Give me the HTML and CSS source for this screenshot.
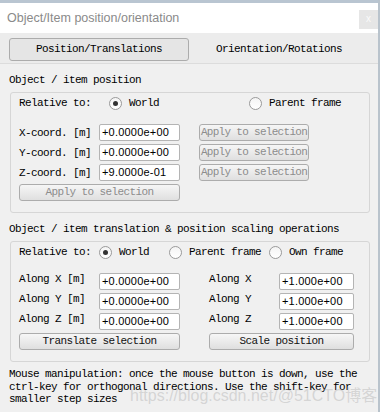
FILE: index.html
```html
<!DOCTYPE html>
<html>
<head>
    <link rel="stylesheet" href="styles.css">
</head>
<body>
    <div class="window">
        <div class="topstrip"></div>
        <div class="titlebar">
            <span class="title">Object/Item position/orientation</span>
            <span class="close">x</span>
        </div>
        <div class="tabbar">
            <div class="tab active">Position/Translations</div>
            <div class="tab">Orientation/Rotations</div>
        </div>

        <div class="content">
            <div class="section-title">Object / item position</div>
            <div class="group">
                <div class="rel-row">
                    <span class="rel-label wide-label">Relative to:</span>
                    <span class="radio checked item-world1"><i></i>World</span>
                    <span class="radio"><i></i>Parent frame</span>
                </div>
                <div class="rows">
                    <div class="row">
                        <span class="lbl">X-coord. [m]</span>
                        <span class="field">+0.0000e+00</span>
                        <span class="btn disabled apply">Apply to selection</span>
                    </div>
                    <div class="row">
                        <span class="lbl">Y-coord. [m]</span>
                        <span class="field">+0.0000e+00</span>
                        <span class="btn disabled apply">Apply to selection</span>
                    </div>
                    <div class="row">
                        <span class="lbl">Z-coord. [m]</span>
                        <span class="field">+9.0000e-01</span>
                        <span class="btn disabled apply">Apply to selection</span>
                    </div>
                    <div class="row">
                        <span class="btn disabled left-btn">Apply to selection</span>
                    </div>
                </div>
            </div>

            <div class="section-title second">Object / item translation &amp; position scaling operations</div>
            <div class="group">
                <div class="rel-row">
                    <span class="rel-label">Relative to:</span>
                    <span class="radio checked item-world2"><i></i>World</span>
                    <span class="radio item-parent2"><i></i>Parent frame</span>
                    <span class="radio"><i></i>Own frame</span>
                </div>
                <div class="rows">
                    <div class="row">
                        <div class="half">
                            <span class="lbl">Along X [m]</span>
                            <span class="field">+0.0000e+00</span>
                        </div>
                        <div class="half-right">
                            <span class="lbl short">Along X</span>
                            <span class="field small">+1.000e+00</span>
                        </div>
                    </div>
                    <div class="row">
                        <div class="half">
                            <span class="lbl">Along Y [m]</span>
                            <span class="field">+0.0000e+00</span>
                        </div>
                        <div class="half-right">
                            <span class="lbl short">Along Y</span>
                            <span class="field small">+1.000e+00</span>
                        </div>
                    </div>
                    <div class="row">
                        <div class="half">
                            <span class="lbl">Along Z [m]</span>
                            <span class="field">+0.0000e+00</span>
                        </div>
                        <div class="half-right">
                            <span class="lbl short">Along Z</span>
                            <span class="field small">+1.000e+00</span>
                        </div>
                    </div>
                    <div class="row">
                        <span class="btn left-btn">Translate selection</span>
                        <span class="btn scale-btn">Scale position</span>
                    </div>
                </div>
            </div>

            <div class="note">Mouse manipulation: once the mouse button is down, use the ctrl-key for orthogonal directions. Use the shift-key for smaller step sizes</div>
        </div>
        <div class="watermark">https://blog.csdn.net/@51CTO博客</div>
    </div>
</body>
</html>
```

FILE: styles.css
```css
body {
    margin: 0;
    width: 380px;
    height: 412px;
    overflow: hidden;
    background-color: #f0f0f0;
    font-family: "Liberation Mono", monospace;
    font-size: 11px;
    letter-spacing: -0.6px;
    color: #000;
}

.window {
    position: relative;
    height: 412px;
    border-right: 2px solid #b9c3cc;
    overflow: hidden;
}

.topstrip {
    height: 3px;
    background-color: #b9c5d1;
}

.titlebar {
    height: 30px;
    background-color: #ffffff;
    display: flex;
    justify-content: space-between;
    align-items: flex-start;
}

.title {
    font-family: "Liberation Sans", sans-serif;
    font-size: 12.5px;
    letter-spacing: 0;
    color: #8a8a8a;
    padding: 8px 0 0 7px;
}

.close {
    width: 19px;
    height: 19px;
    margin-top: 7px;
    background-color: #e6e6e6;
    color: #fafafa;
    font-family: "Liberation Sans", sans-serif;
    font-size: 10px;
    letter-spacing: 0;
    text-align: center;
    line-height: 18px;
}

.tabbar {
    display: flex;
    padding: 5px 9px 2px 9px;
    background-color: #ececec;
    border-bottom: 1px solid #dcdcdc;
}

.tab {
    width: 181px;
    height: 23px;
    box-sizing: border-box;
    line-height: 21px;
    text-align: center;
    border: 1px solid transparent;
}

.tab.active {
    background-color: #e5e5e5;
    border-color: #acacac;
    border-radius: 3px;
}

.content {
    padding: 0 10px 0 9px;
}

.section-title {
    margin-top: 9px;
    line-height: 14px;
}

.group {
    margin: 5px 0 0 1px;
    width: 360px;
    box-sizing: border-box;
    border: 1px solid #d6d6d6;
    border-radius: 3px;
    padding: 1px 0 11px 8px;
}

.rel-row {
    display: flex;
    align-items: center;
    height: 18px;
}

.rel-label {
    width: 80px;
}

.rel-label.wide-label {
    width: 90px;
}

.radio {
    display: flex;
    align-items: center;
}

.radio i {
    width: 11px;
    height: 11px;
    border: 1px solid #9a9a9a;
    border-radius: 50%;
    background: linear-gradient(#f4f4f4, #ffffff);
    margin-right: 7px;
    position: relative;
}

.radio.checked i:after {
    content: '';
    position: absolute;
    left: 3px;
    top: 3px;
    width: 5px;
    height: 5px;
    border-radius: 50%;
    background-color: #333;
}

.item-world1 {
    width: 140px;
}

.item-world2 {
    width: 70px;
}

.item-parent2 {
    width: 100px;
}

.rows {
    margin-top: 12px;
    display: flex;
    flex-direction: column;
    gap: 3px;
}

.row {
    display: flex;
    height: 17px;
    align-items: center;
}

.lbl {
    width: 80px;
    flex-shrink: 0;
}

.lbl.short {
    width: 70px;
}

.field {
    width: 81px;
    height: 17px;
    flex-shrink: 0;
    box-sizing: border-box;
    background-color: #fff;
    border: 1px solid #b4b4b4;
    border-radius: 2px;
    padding-left: 2px;
    font-family: "Liberation Sans", sans-serif;
    font-size: 11px;
    letter-spacing: 0.2px;
    line-height: 15px;
    color: #000;
}

.field.small {
    width: 75px;
}

.half {
    display: flex;
    width: 190px;
}

.half-right {
    display: flex;
}

.btn {
    height: 17px;
    flex-shrink: 0;
    box-sizing: border-box;
    border: 1px solid #acacac;
    border-radius: 3px;
    background: linear-gradient(#f6f6f6, #dfdfdf);
    text-align: center;
    line-height: 15px;
    white-space: nowrap;
    overflow: hidden;
    color: #111;
}

.btn.disabled {
    color: #8c8c8c;
}

.apply {
    width: 110px;
    margin-left: 19px;
    letter-spacing: -0.7px;
}

.left-btn {
    width: 161px;
}

.scale-btn {
    width: 145px;
    margin-left: 29px;
}

.note {
    margin-top: 6px;
    line-height: 12.5px;
    width: 362px;
}

.watermark {
    position: absolute;
    left: 130px;
    top: 382px;
    font-family: "Liberation Sans", "Noto Sans CJK SC", sans-serif;
    font-size: 16px;
    letter-spacing: 0;
    color: rgba(170, 170, 170, 0.4);
}
```
